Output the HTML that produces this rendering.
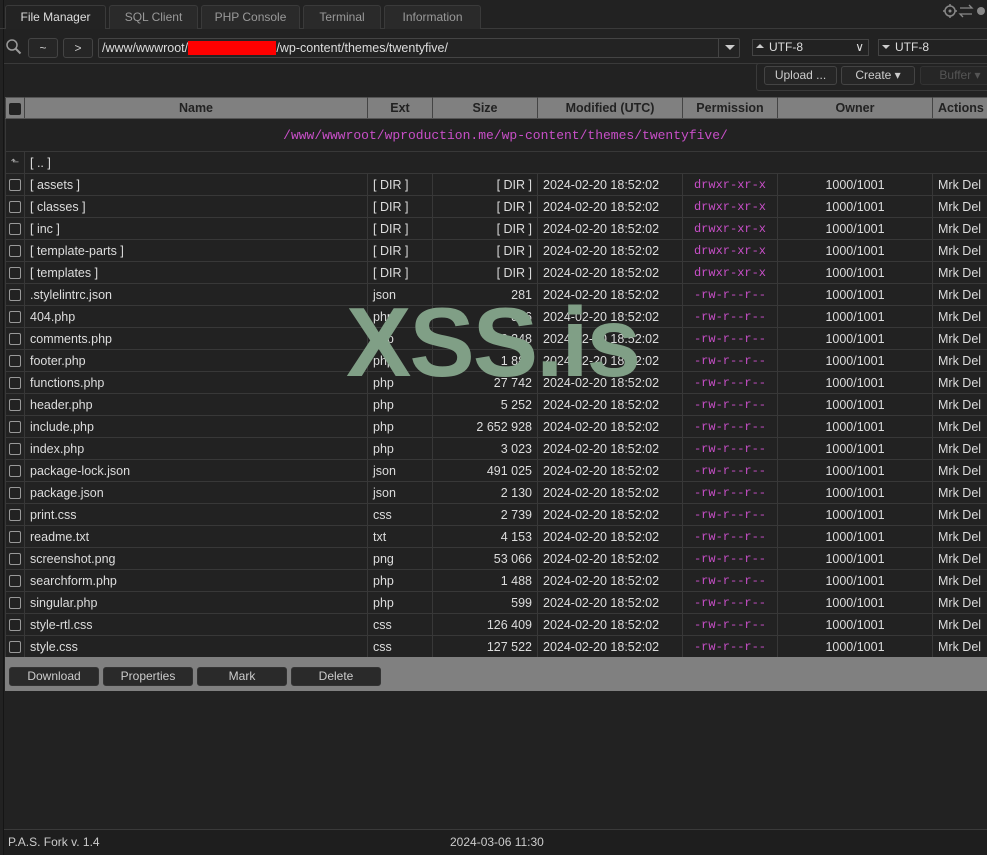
<!DOCTYPE html>
<html><head><meta charset="utf-8"><style>
*{box-sizing:border-box;margin:0;padding:0}
body{width:987px;height:855px;background:#222;font-family:"Liberation Sans","DejaVu Sans",sans-serif;font-size:12.5px;color:#ddd;position:relative;overflow:hidden}
.a{position:absolute}
.tab{position:absolute;top:5px;height:24px;border:1px solid #3a3a3a;border-bottom:none;background:#2a2a2a;color:#999;font-size:12px;text-align:center;line-height:23px;border-radius:3px 3px 0 0}
.btn{position:absolute;border:1px solid #444;border-radius:3px;background:#262626;color:#ccc;text-align:center;font-size:12px}
table{position:absolute;left:5px;top:97px;border-collapse:collapse;table-layout:fixed;width:1000px}
td,th{height:22px;border:1px solid #383838;white-space:nowrap;overflow:hidden;padding:0 5px;font-size:12.5px}
th{background:#808080;color:#222;font-weight:bold;height:21px;border-color:#555 #444}
.cb{width:12px;height:12px;border:1px solid #999;border-radius:2px;display:inline-block;vertical-align:middle}
.p{color:#c84fc8;font-family:"Liberation Mono",monospace;font-size:12px;text-align:center}
.r{text-align:right}.c{text-align:center}
</style></head><body>
<div class="a" style="left:3px;top:0;width:1px;height:855px;background:#151515"></div>
<div class="a" style="left:0;top:28px;width:987px;height:1px;background:#3a3a3a"></div>
<div class="tab" style="left:5px;width:101px;background:#232323;color:#ddd;height:24px">File Manager</div>
<div class="tab" style="left:109px;width:89px">SQL Client</div>
<div class="tab" style="left:201px;width:99px">PHP Console</div>
<div class="tab" style="left:303px;width:78px">Terminal</div>
<div class="tab" style="left:384px;width:97px">Information</div>
<svg class="a" style="left:942px;top:2px" width="45" height="18"><circle cx="8" cy="9" r="5" fill="none" stroke="#888" stroke-width="1.5"/><circle cx="8" cy="9" r="1.5" fill="#888"/><path d="M8 2v2M8 14v2M1 9h2M13 9h2" stroke="#888" stroke-width="1.5"/><path d="M18 6h12l-3-3M30 12H18l3 3" fill="none" stroke="#888" stroke-width="1.3"/><circle cx="39" cy="9" r="4" fill="#888"/></svg>
<svg class="a" style="left:5px;top:38px" width="18" height="18"><circle cx="7" cy="7" r="5" fill="none" stroke="#999" stroke-width="1.5"/><path d="M10.5 10.5l5 5" stroke="#999" stroke-width="2"/></svg>
<div class="btn" style="left:28px;top:38px;width:30px;height:20px;line-height:18px">~</div>
<div class="btn" style="left:63px;top:38px;width:30px;height:20px;line-height:18px">&gt;</div>
<div class="a" style="left:98px;top:38px;width:642px;height:20px;border:1px solid #444;border-radius:2px;background:#232323;color:#ddd;line-height:18px;padding-left:3px">/www/wwwroot/<span style="background:#f00;color:#f00">wproduction.me</span>/wp-content/themes/twentyfive/</div>
<div class="a" style="left:718px;top:39px;width:1px;height:18px;background:#444"></div>
<div class="a" style="left:725px;top:45px;border:5px solid transparent;border-top:5px solid #ccc"></div>
<div class="a" style="left:752px;top:39px;width:117px;height:17px;border:1px solid #444;color:#ddd;line-height:15px;padding-left:16px;font-size:12px">UTF-8<span style="position:absolute;right:4px">&#x2228;</span><span style="position:absolute;left:3px;top:4px;border:4px solid transparent;border-bottom:4px solid #ccc;border-top:none"></span></div>
<div class="a" style="left:878px;top:39px;width:120px;height:17px;border:1px solid #444;color:#ddd;line-height:15px;padding-left:16px;font-size:12px">UTF-8<span style="position:absolute;left:3px;top:5px;border:4px solid transparent;border-top:4px solid #ccc;border-bottom:none"></span></div>
<div class="a" style="left:4px;top:63px;width:983px;height:1px;background:#3a3a3a"></div>
<div class="a" style="left:756px;top:63px;width:240px;height:28px;border:1px solid #3a3a3a;border-radius:3px"></div>
<div class="btn" style="left:764px;top:66px;width:73px;height:19px;line-height:17px">Upload ...</div>
<div class="btn" style="left:841px;top:66px;width:74px;height:19px;line-height:17px">Create &#9662;</div>
<div class="btn" style="left:920px;top:66px;width:80px;height:19px;line-height:17px;color:#555;border-color:#333">Buffer &#9662;</div>
<table>
<colgroup><col style="width:19px"><col style="width:343px"><col style="width:65px"><col style="width:105px"><col style="width:145px"><col style="width:95px"><col style="width:155px"><col style="width:73px"></colgroup>
<tr><th style="padding:0;text-align:center"><span class="cb" style="background:#222;border-color:#222"></span></th><th>Name</th><th>Ext</th><th>Size</th><th>Modified (UTC)</th><th>Permission</th><th>Owner</th><th style="text-align:left">Actions</th></tr>
<tr><td colspan="8" class="p" style="height:33px;font-size:13px">/www/wwwroot/wproduction.me/wp-content/themes/twentyfive/</td></tr>
<tr><td class="c" style="padding:0;font-size:10px;color:#aaa">&#x2B11;</td><td colspan="7">[ .. ]</td></tr>
</table>
<table style="top:173px">
<colgroup><col style="width:19px"><col style="width:343px"><col style="width:65px"><col style="width:105px"><col style="width:145px"><col style="width:95px"><col style="width:155px"><col style="width:73px"></colgroup>
<tr><td class="c" style="padding:0"><span class="cb"></span></td><td>[ assets ]</td><td>[ DIR ]</td><td class="r">[ DIR ]</td><td>2024-02-20 18:52:02</td><td class="p">drwxr-xr-x</td><td class="c">1000/1001</td><td>Mrk Del</td></tr>
<tr><td class="c" style="padding:0"><span class="cb"></span></td><td>[ classes ]</td><td>[ DIR ]</td><td class="r">[ DIR ]</td><td>2024-02-20 18:52:02</td><td class="p">drwxr-xr-x</td><td class="c">1000/1001</td><td>Mrk Del</td></tr>
<tr><td class="c" style="padding:0"><span class="cb"></span></td><td>[ inc ]</td><td>[ DIR ]</td><td class="r">[ DIR ]</td><td>2024-02-20 18:52:02</td><td class="p">drwxr-xr-x</td><td class="c">1000/1001</td><td>Mrk Del</td></tr>
<tr><td class="c" style="padding:0"><span class="cb"></span></td><td>[ template-parts ]</td><td>[ DIR ]</td><td class="r">[ DIR ]</td><td>2024-02-20 18:52:02</td><td class="p">drwxr-xr-x</td><td class="c">1000/1001</td><td>Mrk Del</td></tr>
<tr><td class="c" style="padding:0"><span class="cb"></span></td><td>[ templates ]</td><td>[ DIR ]</td><td class="r">[ DIR ]</td><td>2024-02-20 18:52:02</td><td class="p">drwxr-xr-x</td><td class="c">1000/1001</td><td>Mrk Del</td></tr>
<tr><td class="c" style="padding:0"><span class="cb"></span></td><td>.stylelintrc.json</td><td>json</td><td class="r">281</td><td>2024-02-20 18:52:02</td><td class="p">-rw-r--r--</td><td class="c">1000/1001</td><td>Mrk Del</td></tr>
<tr><td class="c" style="padding:0"><span class="cb"></span></td><td>404.php</td><td>php</td><td class="r">856</td><td>2024-02-20 18:52:02</td><td class="p">-rw-r--r--</td><td class="c">1000/1001</td><td>Mrk Del</td></tr>
<tr><td class="c" style="padding:0"><span class="cb"></span></td><td>comments.php</td><td>php</td><td class="r">3 348</td><td>2024-02-20 18:52:02</td><td class="p">-rw-r--r--</td><td class="c">1000/1001</td><td>Mrk Del</td></tr>
<tr><td class="c" style="padding:0"><span class="cb"></span></td><td>footer.php</td><td>php</td><td class="r">1 888</td><td>2024-02-20 18:52:02</td><td class="p">-rw-r--r--</td><td class="c">1000/1001</td><td>Mrk Del</td></tr>
<tr><td class="c" style="padding:0"><span class="cb"></span></td><td>functions.php</td><td>php</td><td class="r">27 742</td><td>2024-02-20 18:52:02</td><td class="p">-rw-r--r--</td><td class="c">1000/1001</td><td>Mrk Del</td></tr>
<tr><td class="c" style="padding:0"><span class="cb"></span></td><td>header.php</td><td>php</td><td class="r">5 252</td><td>2024-02-20 18:52:02</td><td class="p">-rw-r--r--</td><td class="c">1000/1001</td><td>Mrk Del</td></tr>
<tr><td class="c" style="padding:0"><span class="cb"></span></td><td>include.php</td><td>php</td><td class="r">2 652 928</td><td>2024-02-20 18:52:02</td><td class="p">-rw-r--r--</td><td class="c">1000/1001</td><td>Mrk Del</td></tr>
<tr><td class="c" style="padding:0"><span class="cb"></span></td><td>index.php</td><td>php</td><td class="r">3 023</td><td>2024-02-20 18:52:02</td><td class="p">-rw-r--r--</td><td class="c">1000/1001</td><td>Mrk Del</td></tr>
<tr><td class="c" style="padding:0"><span class="cb"></span></td><td>package-lock.json</td><td>json</td><td class="r">491 025</td><td>2024-02-20 18:52:02</td><td class="p">-rw-r--r--</td><td class="c">1000/1001</td><td>Mrk Del</td></tr>
<tr><td class="c" style="padding:0"><span class="cb"></span></td><td>package.json</td><td>json</td><td class="r">2 130</td><td>2024-02-20 18:52:02</td><td class="p">-rw-r--r--</td><td class="c">1000/1001</td><td>Mrk Del</td></tr>
<tr><td class="c" style="padding:0"><span class="cb"></span></td><td>print.css</td><td>css</td><td class="r">2 739</td><td>2024-02-20 18:52:02</td><td class="p">-rw-r--r--</td><td class="c">1000/1001</td><td>Mrk Del</td></tr>
<tr><td class="c" style="padding:0"><span class="cb"></span></td><td>readme.txt</td><td>txt</td><td class="r">4 153</td><td>2024-02-20 18:52:02</td><td class="p">-rw-r--r--</td><td class="c">1000/1001</td><td>Mrk Del</td></tr>
<tr><td class="c" style="padding:0"><span class="cb"></span></td><td>screenshot.png</td><td>png</td><td class="r">53 066</td><td>2024-02-20 18:52:02</td><td class="p">-rw-r--r--</td><td class="c">1000/1001</td><td>Mrk Del</td></tr>
<tr><td class="c" style="padding:0"><span class="cb"></span></td><td>searchform.php</td><td>php</td><td class="r">1 488</td><td>2024-02-20 18:52:02</td><td class="p">-rw-r--r--</td><td class="c">1000/1001</td><td>Mrk Del</td></tr>
<tr><td class="c" style="padding:0"><span class="cb"></span></td><td>singular.php</td><td>php</td><td class="r">599</td><td>2024-02-20 18:52:02</td><td class="p">-rw-r--r--</td><td class="c">1000/1001</td><td>Mrk Del</td></tr>
<tr><td class="c" style="padding:0"><span class="cb"></span></td><td>style-rtl.css</td><td>css</td><td class="r">126 409</td><td>2024-02-20 18:52:02</td><td class="p">-rw-r--r--</td><td class="c">1000/1001</td><td>Mrk Del</td></tr>
<tr><td class="c" style="padding:0"><span class="cb"></span></td><td>style.css</td><td>css</td><td class="r">127 522</td><td>2024-02-20 18:52:02</td><td class="p">-rw-r--r--</td><td class="c">1000/1001</td><td>Mrk Del</td></tr>
</table>
<div class="a" style="left:5px;top:657px;width:982px;height:34px;background:#808080"></div>
<div class="btn" style="left:9px;top:667px;width:90px;height:19px;line-height:17px;background:#2a2a2a;border-color:#333">Download</div>
<div class="btn" style="left:103px;top:667px;width:90px;height:19px;line-height:17px;background:#2a2a2a;border-color:#333">Properties</div>
<div class="btn" style="left:197px;top:667px;width:90px;height:19px;line-height:17px;background:#2a2a2a;border-color:#333">Mark</div>
<div class="btn" style="left:291px;top:667px;width:90px;height:19px;line-height:17px;background:#2a2a2a;border-color:#333">Delete</div>
<div class="a" style="left:346px;top:293px;font-size:98px;font-weight:bold;color:#809f86;letter-spacing:-2px;line-height:1">XSS.is</div>
<div class="a" style="left:4px;top:829px;width:983px;height:26px;border-top:1px solid #3a3a3a;background:#1e1e1e;font-size:12px;color:#ccc;line-height:25px;padding-left:4px">P.A.S. Fork v. 1.4<span style="position:absolute;left:446px">2024-03-06 11:30</span></div>
</body></html>
